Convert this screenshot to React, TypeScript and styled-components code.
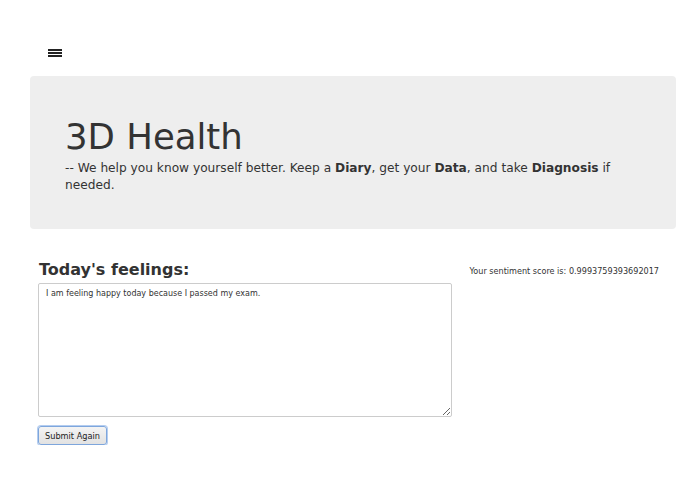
import React from 'react'
import styled, { createGlobalStyle } from 'styled-components'

const GlobalStyle = createGlobalStyle`
    * {
        box-sizing: border-box;
    }
    body {
        margin: 0;
        background: #ffffff;
        font-family: "DejaVu Sans", Verdana, sans-serif;
        color: #333333;
    }
`;

const App = () => {
    return (
        <>
            <GlobalStyle />
            <Page>
                <NavBar>
                    <MenuButton aria-label="menu">
                        <span />
                        <span />
                        <span />
                    </MenuButton>
                </NavBar>
                <Jumbotron>
                    <Title>3D Health</Title>
                    <Lead>
                        -- We help you know yourself better. Keep a <b>Diary</b>, get your <b>Data</b>, and take <b>Diagnosis</b> if needed.
                    </Lead>
                </Jumbotron>
                <Content>
                    <FormColumn>
                        <SectionTitle>Today's feelings:</SectionTitle>
                        <Feelings defaultValue="I am feeling happy today because I passed my exam." />
                        <SubmitButton>Submit Again</SubmitButton>
                    </FormColumn>
                    <Score>Your sentiment score is: 0.9993759393692017</Score>
                </Content>
            </Page>
        </>
    )
}

const Page = styled.div`
    width: 695px;
    padding: 0 19px 0 30px;
`;

const NavBar = styled.nav`
    height: 76px;
    display: flex;
    align-items: flex-start;
    padding: 49px 0 0 18px;
`;

const MenuButton = styled.div`
    display: flex;
    flex-direction: column;
    gap: 1px;
    width: 14px;
    span {
        display: block;
        height: 2px;
        background: #222222;
    }
`;

const Jumbotron = styled.section`
    background: #eeeeee;
    border-radius: 4px;
    height: 153px;
    padding: 38px 35px 0 35px;
`;

const Title = styled.h1`
    margin: 0;
    font-size: 35.5px;
    font-weight: 400;
    line-height: 46px;
    color: #333333;
`;

const Lead = styled.p`
    margin: 0;
    font-size: 12.2px;
    line-height: 17px;
    color: #333333;
    padding-right: 8px;
    b {
        font-weight: 700;
    }
`;

const Content = styled.div`
    display: flex;
    justify-content: space-between;
    padding: 31px 17px 0 8px;
`;

const FormColumn = styled.div`
    display: flex;
    flex-direction: column;
    align-items: flex-start;
`;

const SectionTitle = styled.h2`
    margin: 0 0 3px 1px;
    font-size: 16px;
    font-weight: 700;
    line-height: 20px;
    color: #333333;
`;

const Feelings = styled.textarea`
    width: 414px;
    height: 134px;
    border: 1px solid #cccccc;
    border-radius: 2px;
    padding: 5px 7px;
    font-family: "DejaVu Sans", Verdana, sans-serif;
    font-size: 8px;
    color: #333333;
    resize: vertical;
`;

const SubmitButton = styled.button`
    margin-top: 9px;
    height: 19px;
    padding: 0 6px;
    font-family: "DejaVu Sans", Verdana, sans-serif;
    font-size: 8.2px;
    color: #222222;
    background: linear-gradient(#f4f4f4, #e2e2e2);
    border: 1px solid #7ea6dc;
    border-radius: 3px;
    box-shadow: 0 0 0 1px #b4cdf0;
`;

const Score = styled.div`
    font-size: 8.1px;
    color: #333333;
    padding-top: 6px;
`;

export default App
